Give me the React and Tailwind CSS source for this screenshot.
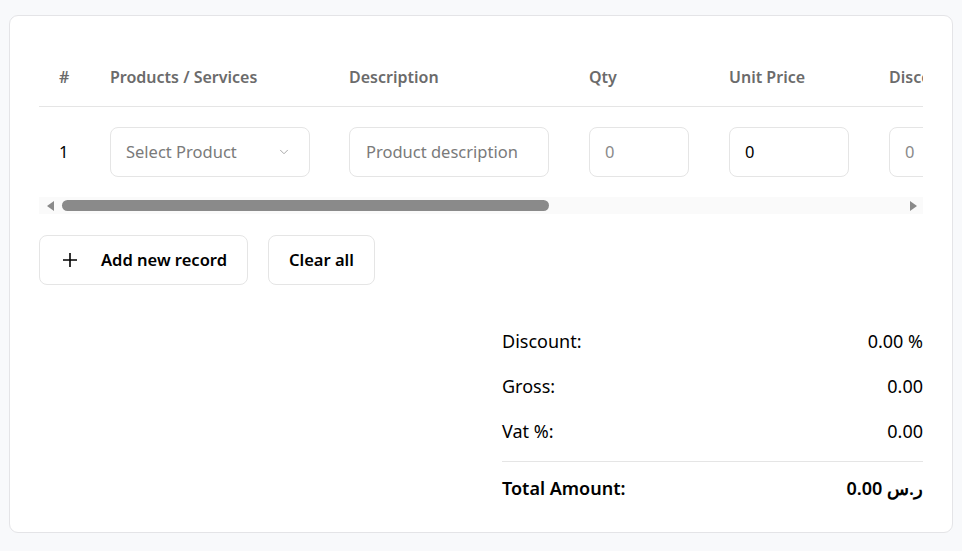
import React from "react";

const font = { fontFamily: '"Noto Sans", "Open Sans", sans-serif' };

function Chevron() {
  return (
    <svg width="14" height="14" viewBox="0 0 24 24" fill="none" stroke="#a3a3a3" strokeWidth="1.6" strokeLinecap="round" strokeLinejoin="round">
      <path d="M6 9l6 6 6-6" />
    </svg>
  );
}

export default function App() {
  return (
    <div className="min-h-[551px] bg-[#f8f9fb] pt-[15px] pl-[9px] pr-[9px] pb-[19px]" style={font}>
      <div className="rounded-[9px] border border-[#e4e4e7] bg-white px-[29px] pt-[31px] pb-[30px]">
        <div className="overflow-hidden">
          <div className="w-[1400px]">
            <div className="flex h-[60px] items-center border-b border-[#e5e5e5] text-[16px] font-semibold text-[#6b6b6b]">
              <div className="w-[51px] pl-[20px]">#</div>
              <div className="w-[240px] pl-[20px]">Products / Services</div>
              <div className="w-[240px] pl-[19px]">Description</div>
              <div className="w-[140px] pl-[19px]">Qty</div>
              <div className="w-[160px] pl-[19px]">Unit Price</div>
              <div className="w-[160px] pl-[19px]">Discount</div>
            </div>
            <div className="flex h-[90px] items-center text-[16.5px]">
              <div className="w-[51px] pl-[20px] text-black">1</div>
              <div className="w-[240px] pl-[20px]">
                <div className="flex h-[50px] w-[200px] items-center justify-between rounded-[8px] border border-[#e5e5e5] pl-[15px] pr-[18px] text-[#7a7a7a]">
                  <span>Select Product</span>
                  <Chevron />
                </div>
              </div>
              <div className="w-[240px] pl-[19px]">
                <div className="flex h-[50px] w-[200px] items-center rounded-[8px] border border-[#e5e5e5] pl-[16px] text-[#7a7a7a]">
                  <span className="whitespace-nowrap">Product description</span>
                </div>
              </div>
              <div className="w-[140px] pl-[19px]">
                <div className="flex h-[50px] w-[100px] items-center rounded-[8px] border border-[#e5e5e5] pl-[15px] text-[#8a8a8a]">0</div>
              </div>
              <div className="w-[160px] pl-[19px]">
                <div className="flex h-[50px] w-[120px] items-center rounded-[8px] border border-[#e5e5e5] pl-[15px] text-black">0</div>
              </div>
              <div className="w-[160px] pl-[19px]">
                <div className="flex h-[50px] w-[100px] items-center rounded-[8px] border border-[#e5e5e5] pl-[15px] text-[#8a8a8a]">0</div>
              </div>
            </div>
          </div>
        </div>
        <div className="flex h-[17px] items-center bg-[#fafafa]">
          <div className="flex w-[23px] justify-center">
            <svg width="8" height="10" viewBox="0 0 8 10"><path d="M7 0 L0 5 L7 10 Z" fill="#8a8a8a" /></svg>
          </div>
          <div className="flex-1">
            <div className="h-[11px] w-[487px] rounded-full bg-[#8a8a8a]" />
          </div>
          <div className="flex w-[20px] justify-center">
            <svg width="8" height="10" viewBox="0 0 8 10"><path d="M1 0 L8 5 L1 10 Z" fill="#8a8a8a" /></svg>
          </div>
        </div>
        <div className="mt-[21px] flex gap-[20px]">
          <button className="flex h-[50px] items-center rounded-[8px] border border-[#e5e5e5] bg-white pl-[22px] pr-[20px] text-[16.5px] font-semibold text-black">
            <svg width="16" height="16" viewBox="0 0 16 16" className="mr-[23px]" stroke="black" strokeWidth="1.6"><path d="M8 1v14M1 8h14" /></svg>
            Add new record
          </button>
          <button className="flex h-[50px] items-center rounded-[8px] border border-[#e5e5e5] bg-white px-[20px] text-[16.5px] font-semibold text-black">
            Clear all
          </button>
        </div>
        <div className="ml-auto mt-[43px] flex w-[421px] flex-col text-[18px] text-black">
          <div className="flex h-[27px] items-center justify-between"><span>Discount:</span><span>0.00 %</span></div>
          <div className="mt-[18px] flex h-[27px] items-center justify-between"><span>Gross:</span><span>0.00</span></div>
          <div className="mt-[18px] flex h-[27px] items-center justify-between"><span>Vat %:</span><span>0.00</span></div>
          <div className="mt-[16px] border-t border-[#e5e5e5]" />
          <div className="mt-[13px] flex h-[27px] items-center justify-between font-semibold"><span>Total Amount:</span><span>0.00 ر.س</span></div>
        </div>
      </div>
    </div>
  );
}
